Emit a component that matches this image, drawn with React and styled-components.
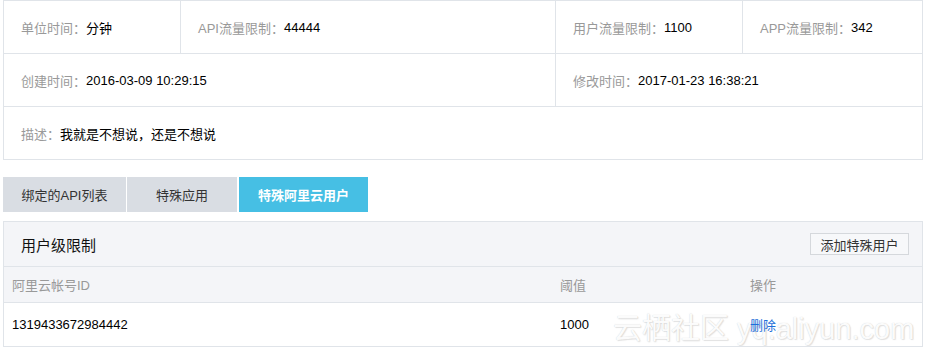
import React from 'react';
import styled, { createGlobalStyle } from 'styled-components';

const GlobalStyle = createGlobalStyle`
  body {
    margin: 0;
    background: #fff;
    font-family: "Liberation Sans", "Noto Sans CJK SC", sans-serif;
    font-size: 13px;
    color: #000;
  }
`;

const Page = styled.div`
  width: 920px;
  padding: 0 0 0 3px;
`;

const InfoPanel = styled.div`
  border: 1px solid #e0e4e9;
`;

const InfoRow = styled.div`
  display: grid;
  grid-template-columns: ${(p) => p.$cols};
  height: 52px;
  & + & {
    border-top: 1px solid #e0e4e9;
  }
`;

const InfoCell = styled.div`
  display: flex;
  align-items: center;
  padding-left: 17px;
  & + & {
    border-left: 1px solid #e0e4e9;
  }
`;

const Label = styled.span`
  color: #999;
`;

const Value = styled.span`
  color: #000;
`;

const Tabs = styled.div`
  display: flex;
  margin-top: 17px;
`;

const Tab = styled.div`
  display: flex;
  align-items: center;
  justify-content: center;
  width: ${(p) => p.$w}px;
  height: 35px;
  margin-right: ${(p) => p.$gap}px;
  background: ${(p) => (p.$active ? '#46bfe4' : '#d9dde3')};
  color: ${(p) => (p.$active ? '#fff' : '#333')};
  font-size: 13px;
  font-weight: ${(p) => (p.$active ? 'bold' : 'normal')};
`;

const Panel = styled.div`
  margin-top: 9px;
  border: 1px solid #e0e4e9;
`;

const PanelHeader = styled.div`
  display: flex;
  align-items: center;
  justify-content: space-between;
  height: 44px;
  padding: 0 13px 0 17px;
  background: #f4f5f8;
`;

const PanelTitle = styled.div`
  font-size: 15px;
  color: #111;
`;

const Button = styled.button`
  height: 22px;
  width: 99px;
  padding: 0;
  border: 1px solid #d5d8dc;
  background: #f7f8fa;
  font-family: inherit;
  font-size: 13px;
  color: #333;
`;

const TableRow = styled.div`
  position: relative;
  display: grid;
  grid-template-columns: 548px 190px 1fr;
  height: ${(p) => p.$h}px;
  border-top: 1px solid #e0e4e9;
  background: ${(p) => (p.$head ? '#f4f5f8' : '#fff')};
  color: ${(p) => (p.$head ? '#999' : '#000')};
  overflow: hidden;
`;

const Cell = styled.div`
  position: relative;
  z-index: 1;
  display: flex;
  align-items: center;
  padding-left: 8px;
`;

const LinkText = styled.a`
  color: #1e6fd9;
  text-decoration: none;
`;

const Watermark = styled.div`
  position: absolute;
  left: 609px;
  top: 2px;
  font-family: "Liberation Sans", "Noto Sans CJK SC", sans-serif;
  font-size: 29px;
  white-space: nowrap;
  color: rgba(255, 255, 255, 0.95);
  text-shadow: 0 0 1px rgba(150, 150, 150, 0.45), 1px 1px 1px rgba(170, 170, 170, 0.3);
  pointer-events: none;
`;

const App = () => {
  return (
    <Page>
      <GlobalStyle />
      <InfoPanel>
        <InfoRow $cols="176px 375px 187px 1fr">
          <InfoCell><Label>单位时间：</Label><Value>分钟</Value></InfoCell>
          <InfoCell><Label>API流量限制：</Label><Value>44444</Value></InfoCell>
          <InfoCell><Label>用户流量限制：</Label><Value>1100</Value></InfoCell>
          <InfoCell><Label>APP流量限制：</Label><Value>342</Value></InfoCell>
        </InfoRow>
        <InfoRow $cols="551px 1fr">
          <InfoCell><Label>创建时间：</Label><Value>2016-03-09 10:29:15</Value></InfoCell>
          <InfoCell><Label>修改时间：</Label><Value>2017-01-23 16:38:21</Value></InfoCell>
        </InfoRow>
        <InfoRow $cols="1fr">
          <InfoCell><Label>描述：</Label><Value>我就是不想说，还是不想说</Value></InfoCell>
        </InfoRow>
      </InfoPanel>

      <Tabs>
        <Tab $w={123} $gap={1}>绑定的API列表</Tab>
        <Tab $w={110} $gap={2}>特殊应用</Tab>
        <Tab $w={129} $gap={0} $active>特殊阿里云用户</Tab>
      </Tabs>

      <Panel>
        <PanelHeader>
          <PanelTitle>用户级限制</PanelTitle>
          <Button>添加特殊用户</Button>
        </PanelHeader>
        <TableRow $head $h={35}>
          <Cell>阿里云帐号ID</Cell>
          <Cell>阈值</Cell>
          <Cell>操作</Cell>
        </TableRow>
        <TableRow $h={43}>
          <Watermark>云栖社区 yq.aliyun.com</Watermark>
          <Cell>1319433672984442</Cell>
          <Cell>1000</Cell>
          <Cell><LinkText href="#">删除</LinkText></Cell>
        </TableRow>
      </Panel>
    </Page>
  );
};

export default App;
